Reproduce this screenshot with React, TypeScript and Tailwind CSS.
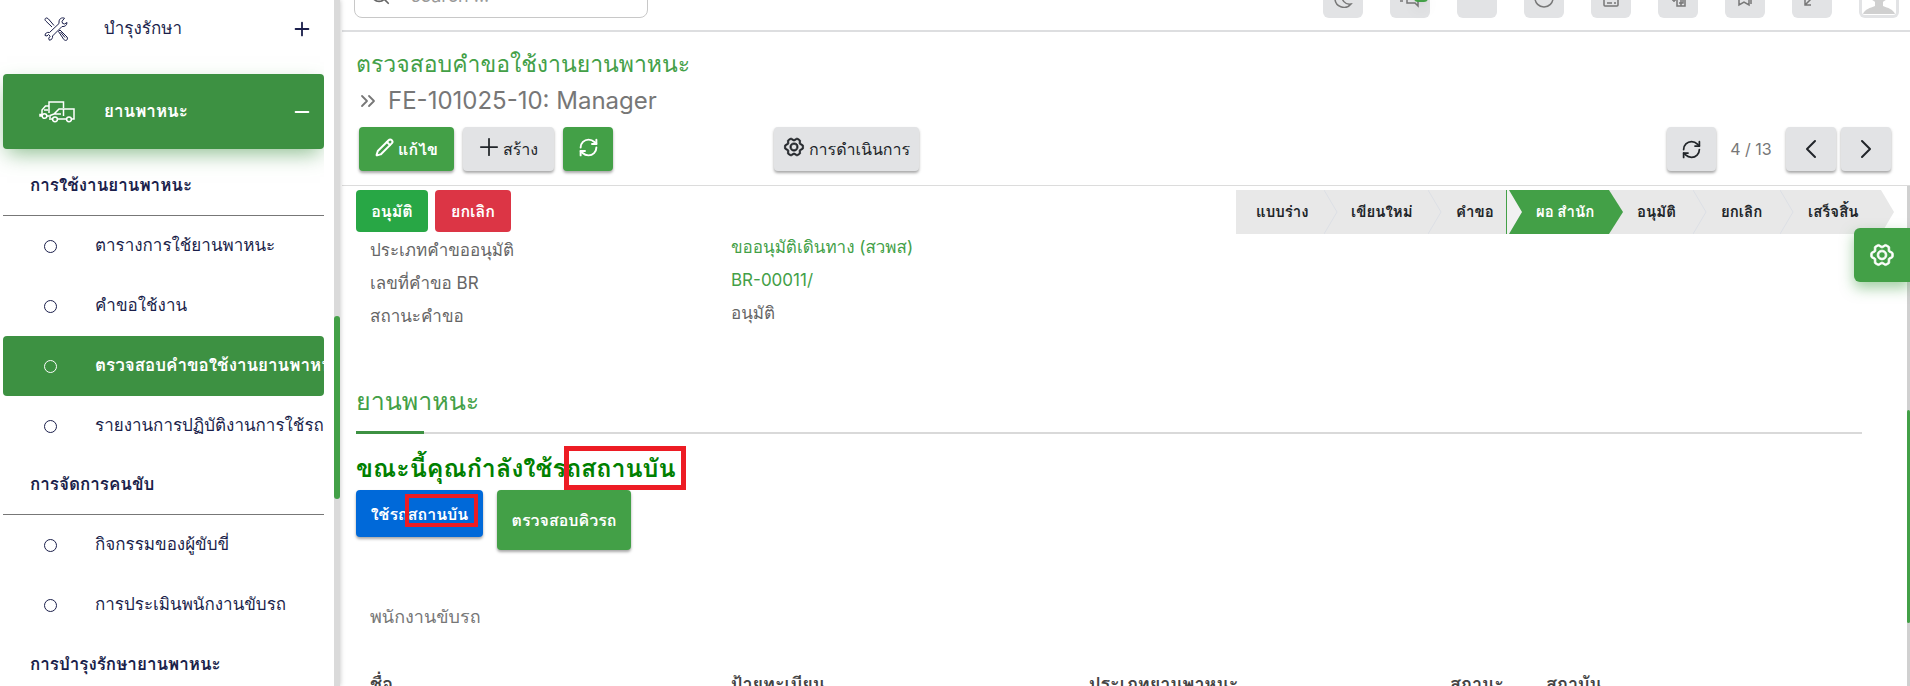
import { ChevronLeft, ChevronRight, ChevronsRight, Minus, Pencil, Plus, RefreshCw, Search } from "lucide-react";
import { PiGearSix } from "react-icons/pi";
import type { ReactNode } from "react";

const usageItems = [
  { label: "ตารางการใช้ยานพาหนะ", active: false },
  { label: "คำขอใช้งาน", active: false },
  { label: "ตรวจสอบคำขอใช้งานยานพาหนะ", active: true },
  { label: "รายงานการปฏิบัติงานการใช้รถ", active: false },
];

const driverItems = [
  { label: "กิจกรรมของผู้ขับขี่", active: false },
  { label: "การประเมินพนักงานขับรถ", active: false },
];

const fields = [
  { label: "ประเภทคำขออนุมัติ", value: "ขออนุมัติเดินทาง (สวพส)", link: true },
  { label: "เลขที่คำขอ BR", value: "BR-00011/", link: true },
  { label: "สถานะคำขอ", value: "อนุมัติ", link: false },
];

const ToolsIcon = () => (
  <svg viewBox="0 0 24 24" className="h-6 w-6" fill="none" stroke="currentColor" strokeWidth="1">
    <path d="M1 2.5C1 1.5 2 .7 3 1l1.500 1 5.500 6.500M1 2.500c0 .6.300 1 .8 1.500L8 10M14.500 14.500l1.500-1.500 7 7c1 1.500.3 3-.7 3.300-1.300.4-2-.3-2.600-1z" />
    <path d="M20.500 1.200c-2.500-1-5.500.3-5.500 3.800v1.500L5.500 15.500c-2.500-.7-4.500.8-4.500 3l2 .500 1.500-1.500 1.700 1.700-1.500 2 .6 2c2.500-.2 3.700-2.200 3.200-4.200L18 9.500c3 .5 5-1.500 5-4l-2.500 1.500-2-.700-.500-2z" />
    <path d="m16.500 15 4.500 5.500" />
  </svg>
);

const TrucksIcon = () => (
  <svg viewBox="0 0 36 22" className="h-[22px] w-9" fill="none" stroke="currentColor" strokeWidth="1.500">
    <path d="M24.500 7V1H10v4H6.500L3 9v4.500H1v1.500h2M10 5v7M5 9h4M8 15h2" />
    <circle cx="5.500" cy="15" r="2.300" />
    <path d="M11 17v-2.500l4-1.500 5-5h15v10h-2.500M27 18h-8M13.500 18H10M24.500 8v7M15 13h7" />
    <circle cx="16" cy="18.300" r="2.400" />
    <circle cx="30" cy="18.300" r="2.400" />
  </svg>
);

const SidebarItem = ({ label, active }: { label: string; active: boolean }) => (
  <a
    href="#"
    className={`flex h-[60px] items-center overflow-hidden rounded whitespace-nowrap text-[17px] ${
      active ? "bg-[#3d9142] font-bold text-white" : "text-[#1b1f4b]"
    }`}
  >
    <span className="ml-[41px] h-[13px] w-[13px] shrink-0 rounded-full border border-current" />
    <span className="ml-[38px]">{label}</span>
  </a>
);

const SidebarHeading = ({ children, last = false }: { children: ReactNode; last?: boolean }) => (
  <h3
    className={`flex h-[59px] items-center pl-[27px] text-[17px] font-bold text-[#1b1f4b] ${
      last ? "" : "border-b border-[#777]"
    }`}
  >
    {children}
  </h3>
);

const Sidebar = () => (
  <aside className="z-10 flex w-[340px] shrink-0 bg-white shadow-[0_0_5px_rgba(0,0,0,0.25)]">
    <nav className="w-[324px] overflow-hidden pl-[3px]">
      <button type="button" className="flex h-[66px] w-full items-center pb-2 pl-[41px] text-[17px] text-[#1b1f4b]">
        <ToolsIcon />
        <span className="ml-9 flex-1 text-left">บำรุงรักษา</span>
        <Plus className="mr-[11px] h-[22px] w-[22px]" strokeWidth={2} />
      </button>
      <button
        type="button"
        className="my-2 flex h-[75px] w-full items-center rounded bg-[#3d9142] pl-9 text-[17px] font-bold text-white shadow-[0_8px_20px_-4px_rgba(61,145,66,0.6)]"
      >
        <TrucksIcon />
        <span className="ml-[29px] flex-1 text-left">ยานพาหนะ</span>
        <Minus className="mr-[11px] h-[22px] w-[22px]" strokeWidth={2} />
      </button>
      <SidebarHeading>การใช้งานยานพาหนะ</SidebarHeading>
      {usageItems.map((item) => (
        <SidebarItem key={item.label} {...item} />
      ))}
      <SidebarHeading>การจัดการคนขับ</SidebarHeading>
      {driverItems.map((item) => (
        <SidebarItem key={item.label} {...item} />
      ))}
      <SidebarHeading last>การบำรุงรักษายานพาหนะ</SidebarHeading>
    </nav>
    <div className="ml-auto w-[6px] bg-[#dadada] pt-[316px]">
      <div className="h-[183px] rounded-full bg-[#43a047]" />
    </div>
  </aside>
);

const TopButton = ({ label, children }: { label: string; children?: ReactNode }) => (
  <button
    type="button"
    aria-label={label}
    className="flex h-10 w-10 items-center justify-center rounded-md bg-[#e2e3e5] text-[#777]"
  >
    {children}
  </button>
);

const TopIcon = ({ children }: { children: ReactNode }) => (
  <svg viewBox="0 0 20 20" className="h-5 w-5" fill="none" stroke="currentColor" strokeWidth="1.500">
    {children}
  </svg>
);

const TopBar = () => (
  <header className="flex h-8 items-end justify-between overflow-hidden border-b-2 border-[#dddee0] pr-[11px] pl-3">
    <label className="mb-3 flex h-[46px] w-[294px] shrink-0 items-center rounded-lg border border-[#c8c8c8] pl-[14px] text-[#666]">
      <Search className="h-[22px] w-[22px] shrink-0" strokeWidth={1.8} />
      <input
        type="search"
        placeholder="search ..."
        className="ml-5 w-full text-[18px] outline-none placeholder:text-[#999]"
      />
    </label>
    <div className="mb-3 flex gap-[27px]">
      <TopButton label="โหมดกลางคืน">
        <TopIcon>
          <path d="M2 10a9 9 0 0 0 16 6C12 17 8 12 9 6" />
        </TopIcon>
      </TopButton>
      <div className="relative">
        <TopButton label="ข้อความ">
          <TopIcon>
            <path d="M0 13h3M7 8v7h8l3 3V5H7z" />
          </TopIcon>
        </TopButton>
        <span className="absolute top-2 right-[2px] h-4 w-[14px] rounded-sm bg-[#43a047] shadow-lg" />
      </div>
      <TopButton label="ภาษา" />
      <TopButton label="กิจกรรม">
        <TopIcon>
          <circle cx="10" cy="10" r="9" />
        </TopIcon>
      </TopButton>
      <TopButton label="ปฏิทิน">
        <TopIcon>
          <rect x="3" y="2" width="14" height="16" rx="1" />
          <path d="M3 11h14M6 15h5M13 15h2" />
        </TopIcon>
      </TopButton>
      <TopButton label="แปลภาษา">
        <TopIcon>
          <path d="M4 12h4M6 10v4M9 5h8v13H9zM11 11h4v4h-4M13 11v7" />
        </TopIcon>
      </TopButton>
      <TopButton label="บุ๊กมาร์ก">
        <TopIcon>
          <path d="M4 3v14l5-3 5 3V3M16 5v11" />
        </TopIcon>
      </TopButton>
      <TopButton label="เต็มจอ">
        <TopIcon>
          <path d="M3 11v6h6M3 17 11 9" />
        </TopIcon>
      </TopButton>
      <TopButton label="บัญชีผู้ใช้">
        <svg viewBox="0 0 40 40" className="h-10 w-10">
          <rect x="3" y="3" width="34" height="34" rx="3" fill="#fff" />
          <path d="M4 36c2-5 7-6 12-8v-5h8v5c5 2 10 3 12 8z" fill="#d0d0d0" />
          <circle cx="20" cy="16" r="9" fill="#d0d0d0" />
        </svg>
      </TopButton>
    </div>
  </header>
);

interface ActionButtonProps {
  children: ReactNode;
  label?: string;
  tone: "green" | "gray";
  size: string;
}

const ActionButton = ({ children, label, tone, size }: ActionButtonProps) => (
  <button
    type="button"
    aria-label={label}
    className={`flex h-11 items-center justify-center gap-1 rounded text-[16px] whitespace-nowrap shadow-[0_2px_3px_rgba(0,0,0,0.35)] ${size} ${
      tone === "green" ? "bg-[#43a047] font-bold text-white" : "bg-[#e2e3e5] text-[#212529]"
    }`}
  >
    {children}
  </button>
);

const ControlPanel = () => (
  <section className="h-[154px] border-b border-[#dcdcdc] pl-[14px]">
    <h1 className="pt-4 text-[23px] leading-[32px] text-[#43a047]">ตรวจสอบคำขอใช้งานยานพาหนะ</h1>
    <div className="flex h-[42px] items-center text-[24px] text-[#777]">
      <ChevronsRight className="h-6 w-6 shrink-0" strokeWidth={1.8} />
      <span className="ml-2">FE-101025-10: Manager</span>
    </div>
    <div className="flex items-center justify-between pt-[5px] pr-[19px] pl-[3px]">
      <div className="flex">
        <div className="flex gap-[9px]">
          <ActionButton tone="green" size="w-[95px]">
            <Pencil className="mb-1 h-[19px] w-[19px]" strokeWidth={2.5} /> แก้ไข
          </ActionButton>
          <ActionButton tone="gray" size="w-[91px]">
            <Plus className="-mx-1 mb-1 h-7 w-7" strokeWidth={1.5} /> สร้าง
          </ActionButton>
          <ActionButton tone="green" size="w-[50px]" label="รีเฟรช">
            <RefreshCw className="mb-1 h-[21px] w-[21px]" strokeWidth={2.2} />
          </ActionButton>
        </div>
        <div className="ml-[161px]">
          <ActionButton tone="gray" size="w-[145px]">
            <PiGearSix className="mb-1 h-[22px] w-[22px]" stroke="currentColor" strokeWidth={8} /> การดำเนินการ
          </ActionButton>
        </div>
      </div>
      <div className="flex items-center">
        <ActionButton tone="gray" size="w-[49px]" label="โหลดใหม่">
          <RefreshCw className="h-[21px] w-[21px]" strokeWidth={2} />
        </ActionButton>
        <span className="w-[70px] text-center text-[16px] text-[#777]">4 / 13</span>
        <div className="flex gap-[5px]">
          <ActionButton tone="gray" size="w-[50px]" label="ก่อนหน้า">
            <ChevronLeft className="h-8 w-8" strokeWidth={1.5} />
          </ActionButton>
          <ActionButton tone="gray" size="w-[50px]" label="ถัดไป">
            <ChevronRight className="h-8 w-8" strokeWidth={1.5} />
          </ActionButton>
        </div>
      </div>
    </div>
  </section>
);

const StepDivider = () => (
  <svg viewBox="0 0 14 44" className="h-11 w-[14px] shrink-0" fill="none">
    <path d="M0 0 13 22 0 44" stroke="#dcdfe5" />
  </svg>
);

const Step = ({ label, size }: { label: string; size: string }) => (
  <button type="button" className={`h-11 text-left whitespace-nowrap ${size}`}>
    {label}
  </button>
);

const StatusBar = () => (
  <div className="flex shrink-0 text-[15px] font-bold text-[#212529]">
    <div className="flex bg-[#e8e8e8]">
      <Step label="แบบร่าง" size="w-[88px] pl-5" />
      <StepDivider />
      <Step label="เขียนใหม่" size="w-[90px] pl-[13px]" />
      <StepDivider />
      <Step label="คำขอ" size="w-16 pl-[14px]" />
      <svg viewBox="0 0 16 44" className="h-11 w-4 shrink-0">
        <path d="M.5 0v44" stroke="#43a047" />
        <path d="M1 0h2l13 22L3 44H1z" fill="#f1f1f1" />
        <path d="M3 0h13v44H3l13-22z" fill="#43a047" />
      </svg>
      <button type="button" aria-current="step" className="h-11 w-[87px] bg-[#43a047] pl-[14px] text-left text-white">
        ผอ สำนัก
      </button>
      <svg viewBox="0 0 14 44" className="h-11 w-[14px] shrink-0">
        <path d="M0 0 14 22 0 44z" fill="#43a047" />
      </svg>
      <Step label="อนุมัติ" size="w-[70px] pl-[14px]" />
      <StepDivider />
      <Step label="ยกเลิก" size="w-[73px] pl-[14px]" />
      <StepDivider />
      <Step label="เสร็จสิ้น" size="w-[87px] pl-[14px]" />
    </div>
    <svg viewBox="0 0 14 44" className="h-11 w-[14px] shrink-0">
      <path d="M0 0 13 22 0 44z" fill="#e8e8e8" />
    </svg>
  </div>
);

const DriverTable = () => (
  <table className="mt-10 w-full table-fixed text-left text-[18px] text-[#444]">
    <colgroup>
      <col className="w-[361px]" />
      <col className="w-[358px]" />
      <col className="w-[361px]" />
      <col className="w-24" />
      <col />
    </colgroup>
    <thead>
      <tr>
        <th>ชื่อ</th>
        <th>ป้ายทะเบียน</th>
        <th>ประเภทยานพาหนะ</th>
        <th>สถานะ</th>
        <th>สถาบัน</th>
      </tr>
    </thead>
  </table>
);

export default function App() {
  return (
    <div className="flex h-screen overflow-hidden bg-white font-['Inter','Loma','Noto_Sans',sans-serif]">
      <Sidebar />
      <div className="flex min-w-0 flex-1 flex-col pl-[2px]">
        <TopBar />
        <ControlPanel />
        <main className="relative flex min-h-0 flex-1">
          <div className="min-w-0 flex-1 overflow-hidden pl-[14px]">
            <div className="flex items-start justify-between pt-1 pr-3">
              <div className="flex gap-[7px] text-[16px] font-bold text-white">
                <button type="button" className="h-[42px] w-[72px] rounded bg-[#28a745]">อนุมัติ</button>
                <button type="button" className="h-[42px] w-[76px] rounded bg-[#dc3545]">ยกเลิก</button>
              </div>
              <StatusBar />
            </div>
            <dl className="pl-[14px] text-[17px] leading-[33px] text-[#666]">
              {fields.map((field) => (
                <div key={field.label} className="flex">
                  <dt className="w-[361px]">{field.label}</dt>
                  <dd className="leading-[27px]">
                    {field.link ? (
                      <a href="#" className="text-[#43a047]">{field.value}</a>
                    ) : (
                      field.value
                    )}
                  </dd>
                </div>
              ))}
            </dl>
            <h2 className="mt-[43px] mr-[45px] border-b-2 border-[#d9d9d9] text-[25px] leading-[50px] text-[#43a047]">
              ยานพาหนะ
              <span className="-mb-[2px] block h-2 w-[68px] border-b-3 border-[#3d9142]" />
            </h2>
            <div className="mt-3 flex">
              <p className="relative text-[25px] leading-[44px] font-bold text-[#008000]">
                ขณะนี้คุณกำลังใช้รถสถานบัน
                <span className="absolute top-0 -right-[10px] h-11 w-[122px] border-[5px] border-[#ed1c24]" />
              </p>
            </div>
            <div className="flex items-start gap-[14px] text-[16px] font-bold text-white">
              <button type="button" className="relative h-[47px] w-[127px] rounded bg-[#0069d9] shadow-[0_2px_3px_rgba(0,0,0,0.35)]">
                ใช้รถสถานบัน
                <span className="absolute top-1 right-[5px] h-[33px] w-[73px] border-4 border-[#ed1c24]" />
              </button>
              <button type="button" className="h-[60px] w-[134px] rounded bg-[#43a047] shadow-[0_2px_3px_rgba(0,0,0,0.35)]">
                ตรวจสอบคิวรถ
              </button>
            </div>
            <div className="mt-[54px] pl-[14px]">
              <p className="text-[18px] leading-[26px] text-[#777]">พนักงานขับรถ</p>
              <DriverTable />
            </div>
          </div>
          <div className="w-[3px] shrink-0 bg-[#d0d0d0] pt-[224px]">
            <div className="h-[213px] rounded-full bg-[#43a047]" />
          </div>
          <button
            type="button"
            aria-label="ตั้งค่า"
            className="absolute top-[42px] right-0 flex h-[54px] w-14 items-center justify-center rounded-l-md bg-[#43a047] text-white shadow-[0_6px_14px_rgba(67,160,71,0.5)]"
          >
            <PiGearSix className="h-[26px] w-[26px]" stroke="currentColor" strokeWidth={8} />
          </button>
        </main>
      </div>
    </div>
  );
}
